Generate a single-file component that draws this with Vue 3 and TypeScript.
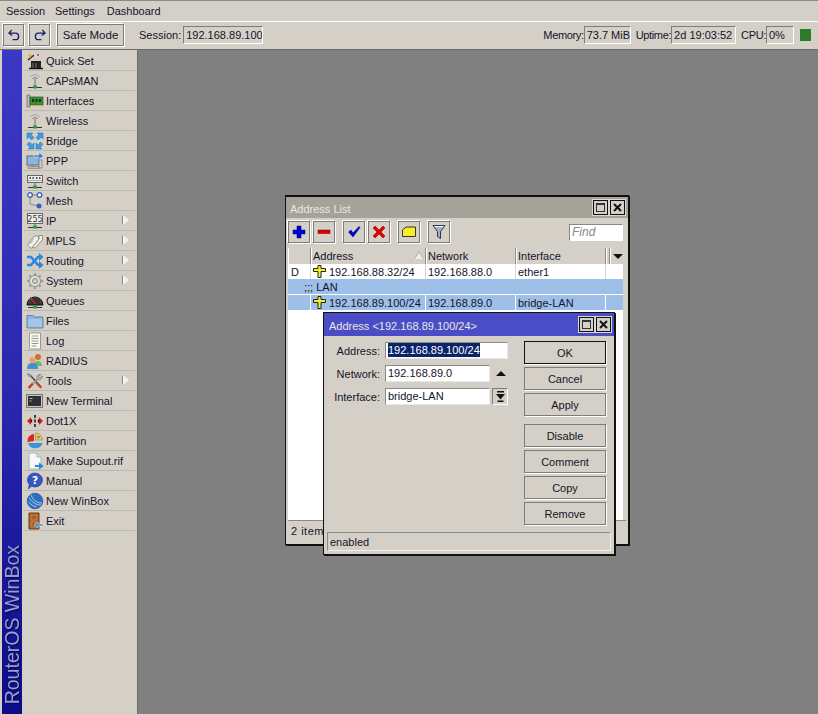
<script setup lang="ts">
interface MenuItem {
  label: string
  icon: string
  sub?: boolean
}

const base = '<path d="M2 15.5h14" stroke="#333" stroke-width="1"/><rect x="7" y="13.5" width="4" height="3" fill="#2f9a3a"/>'
const antenna = '<path d="M6.500 7a3 3 0 0 1 5 0" fill="none" stroke="#888" stroke-width="1.200"/><path d="M4.500 5a5.500 5.500 0 0 1 9 0" fill="none" stroke="#aaa" stroke-width="1.200"/><path d="M9 7v7" stroke="#888" stroke-width="1.400"/>' + base

const icons: Record<string, string> = {
  quickset: '<rect x="5" y="9" width="10" height="7" fill="#222"/><path d="M3 16.500h14" stroke="#111" stroke-width="1.400"/><path d="M7 11v5M10 11v5" stroke="#777"/><path d="M2 8l6-5" stroke="#222" stroke-width="1.500"/><path d="M8 2l3 3" stroke="#ddd" stroke-width="1.500"/><path d="M4 1l1 2 2 .5-2 1-1 2-1-2-2-1 2-.5z" fill="#e9b92a"/><circle cx="12" cy="3" r="1" fill="#d33"/>',
  antenna,
  interfaces: '<path d="M1 3h3v12H1z" fill="#bbb" stroke="#666" stroke-width=".7"/><rect x="4" y="5" width="13" height="8" fill="#3d8f3a" stroke="#23601f" stroke-width=".7"/><path d="M6 7h2v3H6zM9.500 7h2v3h-2zM13 7h2v3h-2z" fill="#1c2f1b"/><path d="M5 13.500h11" stroke="#d6b340"/>',
  bridge: '<g fill="#3f9be2" stroke="#1f6cb0" stroke-width=".5"><path d="M1 1h6L5.200 2.800 8 5.600 5.600 8 2.800 5.200 1 7z"/><path d="M17 1h-6l1.800 1.800L10 5.600 12.400 8l2.800-2.800L17 7z"/><path d="M8 17H2l1.800-1.800L1 12.400 3.400 10l2.800 2.800L8 11z"/><path d="M10 17h6l-1.800-1.800L17 12.400 14.600 10l-2.800 2.800L10 11z"/></g>',
  ppp: '<rect x="1" y="4" width="12" height="9" fill="#8db6dc" stroke="#667" /><path d="M2 14.500h11v2H2z" fill="#bbb" stroke="#777" stroke-width=".6"/><path d="M6 13v2" stroke="#777"/><path d="M8 3h5V.5l4.500 3.500L13 7.500V5H8z" fill="#2d86d6" stroke="#fff" stroke-width=".4"/><rect x="13" y="8" width="3" height="8" fill="#ccc" stroke="#777" stroke-width=".7"/>',
  switch: '<rect x="1.500" y="3.500" width="15" height="7" fill="#eee" stroke="#666"/><path d="M3.500 6h1.500M6.500 6H8M10 6h1.500M13 6h1.500" stroke="#222" stroke-width="1.500"/><path d="M2 8.500h14" stroke="#aaa"/><path d="M9 10.500v3" stroke="#666"/>' + base,
  mesh: '<path d="M4 3h9M4 3v9l9 2" fill="none" stroke="#888" stroke-width="1"/><circle cx="4" cy="3" r="2.300" fill="#fff" stroke="#3a5bc0" stroke-width="1.300"/><circle cx="13.500" cy="3" r="2.300" fill="#fff" stroke="#3a5bc0" stroke-width="1.300"/><circle cx="13" cy="14" r="2.500" fill="#3a5bc0"/>',
  ip: '<rect x="1.500" y="1.500" width="15" height="10" fill="#eee" stroke="#666"/><text x="9" y="9.500" font-size="8" font-family="DejaVu Sans" text-anchor="middle" fill="#333">255</text><path d="M9 11.500v2" stroke="#666"/>' + base,
  mpls: '<g fill="#f1f1ea" stroke="#8a8a80" stroke-width=".9"><path d="M1.500 13l7-9h4v4l-7 8.500z"/><path d="M6 15.500l7-8.500V3.500h3.500v4l-7 8.500z"/></g><path d="M4 12l4-5M8 14l4-5" stroke="#9fc08f"/>',
  routing: '<path d="M1 5h4l7 8h2" fill="none" stroke="#2f86d8" stroke-width="2.600"/><path d="M1 13h4l7-8h2" fill="none" stroke="#2f86d8" stroke-width="2.600"/><path d="M13 1l4.500 4L13 9zM13 9l4.500 4L13 17z" fill="#2f86d8"/>',
  system: '<circle cx="9" cy="9" r="5.500" fill="#e4e2dc" stroke="#8a8a84" stroke-width="1"/><circle cx="9" cy="9" r="2.500" fill="#d4d0c8" stroke="#8a8a84"/><g stroke="#a0a09a" stroke-width="2.400"><path d="M9 1v2.500M9 14.500V17M1 9h2.500M14.500 9H17M3.300 3.300l1.800 1.800M12.900 12.900l1.800 1.800M3.300 14.700l1.800-1.800M12.900 5.100l1.800-1.800"/></g>',
  queues: '<path d="M1 13a8 8 0 0 1 16 0z" fill="#333" stroke="#111"/><path d="M4 5.500L10 12" stroke="#e02020" stroke-width="1.200"/><path d="M3 11a6 6 0 0 1 12 0" fill="none" stroke="#888" stroke-dasharray="1 1.500"/>' + base,
  files: '<path d="M1 3.500h6l1.500 1.500H17v11H1z" fill="#8db7de" stroke="#5c82a8"/><path d="M2 7h14v8H2z" fill="#a4c5e4"/>',
  log: '<path d="M3.500 1h11v16h-11z" fill="#fbfbf4" stroke="#999"/><path d="M5.500 4h7M5.500 6.500h7M5.500 9h7M5.500 11.500h7M5.500 14h5" stroke="#8a9a8a"/>',
  radius: '<circle cx="12" cy="5" r="3" fill="#c9762c"/><path d="M8 14c0-4 2-5 4-5s4 1 4 5z" fill="#6cbd6c"/><circle cx="6.500" cy="8" r="3" fill="#e2a070"/><path d="M1 17c0-5 2.500-6 5.500-6s5.500 1 5.500 6z" fill="#4a8ed0"/>',
  tools: '<path d="M3 2l12 13" stroke="#555" stroke-width="1.800"/><path d="M1 1l3 1 1 3-2 0-2-2z" fill="#999"/><path d="M11 10l5 5-1.500 1.500-5-5z" fill="#d23a24"/><path d="M15 2.500a3.300 3.300 0 0 0-4 4.200L2 15l1.500 1.500 8.300-9a3.300 3.300 0 0 0 4.500-3.800L14 6l-1.800-1.800z" fill="#b8b8b4" stroke="#666" stroke-width=".6"/><path d="M2 15l4-4 1.500 1.500-4 4z" fill="#d23a24"/>',
  terminal: '<rect x=".5" y="2.500" width="16" height="13" fill="#c8c6c0" stroke="#777"/><rect x="2" y="4" width="13" height="10" fill="#2e3036"/><path d="M3.500 6.500h3M3.500 9h2" stroke="#9acb9a"/>',
  dot1x: '<path d="M1 9l4-4v8zM17 9l-4-4v8z" fill="#e01818"/><path d="M5.500 7.500v3M12.500 7.500v3" stroke="#111" stroke-width="1.300"/><path d="M9 3v3M9 7.500v3M9 12v3" stroke="#111" stroke-width="1.500"/>',
  partition: '<path d="M8 2a7 7 0 0 0-6.500 8L8 9z" fill="#e0241c"/><path d="M9.500 1a7 7 0 0 1 7 7H9.500z" fill="#e4c760" stroke="#8a8a40" stroke-width=".6"/><path d="M2 11h14.500a7.500 7 0 0 1-14.500 0z" fill="#3c93d8"/><path d="M11.500 4h2v2h-2z" fill="#5e8a50"/>',
  supout: '<path d="M3 1h8l4 4v12H3z" fill="#f4f8fb" stroke="#9bb"/><path d="M11 1v4h4" fill="#cde" stroke="#9bb"/><path d="M9 13h4v-2.500l4.500 3.500-4.500 3.500V15H9z" fill="#2f86d8"/>',
  manual: '<path d="M9 1a7.500 7 0 1 1-3.500 13.200L2.500 17l.7-4.500A7.500 7 0 0 1 9 1z" fill="#3658c4" stroke="#1d3590" stroke-width=".6"/><text x="9" y="12" font-size="10.500" font-family="DejaVu Sans" font-weight="bold" text-anchor="middle" fill="#fff">?</text>',
  winbox: '<circle cx="9" cy="9" r="7.800" fill="#2f6fc0" stroke="#1d4b8e" stroke-width=".7"/><path d="M3 6c4 5 7 7 12 7M5 3c2 5 5 8 11 8M2.500 10c2 2 4 4 8 5" fill="none" stroke="#bcd7f1" stroke-width=".9"/>',
  exit: '<path d="M3 1h10v16H3z" fill="#a8602a" stroke="#6b3a14"/><path d="M5 3h6v5H5zM5 10h6v5H5z" fill="none" stroke="#d09050" stroke-width=".8"/><path d="M8 13l4-3v2h5v2h-5v2z" fill="#3f93de" stroke="#fff" stroke-width=".4"/>',
}

const menu: MenuItem[] = [
  { label: 'Quick Set', icon: 'quickset' },
  { label: 'CAPsMAN', icon: 'antenna' },
  { label: 'Interfaces', icon: 'interfaces' },
  { label: 'Wireless', icon: 'antenna' },
  { label: 'Bridge', icon: 'bridge' },
  { label: 'PPP', icon: 'ppp' },
  { label: 'Switch', icon: 'switch' },
  { label: 'Mesh', icon: 'mesh' },
  { label: 'IP', icon: 'ip', sub: true },
  { label: 'MPLS', icon: 'mpls', sub: true },
  { label: 'Routing', icon: 'routing', sub: true },
  { label: 'System', icon: 'system', sub: true },
  { label: 'Queues', icon: 'queues' },
  { label: 'Files', icon: 'files' },
  { label: 'Log', icon: 'log' },
  { label: 'RADIUS', icon: 'radius' },
  { label: 'Tools', icon: 'tools', sub: true },
  { label: 'New Terminal', icon: 'terminal' },
  { label: 'Dot1X', icon: 'dot1x' },
  { label: 'Partition', icon: 'partition' },
  { label: 'Make Supout.rif', icon: 'supout' },
  { label: 'Manual', icon: 'manual' },
  { label: 'New WinBox', icon: 'winbox' },
  { label: 'Exit', icon: 'exit' },
]

const actions = ['Disable', 'Comment', 'Copy', 'Remove']
</script>

<template>
  <div class="app">
    <div class="menubar">
      <span class="first">Session</span>
      <span>Settings</span>
      <span>Dashboard</span>
    </div>

    <div class="toolbar">
      <button class="btn icon-btn" type="button">
        <svg width="12" height="12" viewBox="0 0 13 13"><path d="M4 1L1 4.500l3.500 2.500M1.500 4.500H8a3.500 3.500 0 0 1 0 7H5" fill="none" stroke="#16206e" stroke-width="1.500"/></svg>
      </button>
      <button class="btn icon-btn" type="button">
        <svg width="12" height="12" viewBox="0 0 13 13"><path d="M9 1l3 3.500L8.500 7M11.500 4.500H5a3.500 3.500 0 0 0 0 7h3" fill="none" stroke="#16206e" stroke-width="1.500"/></svg>
      </button>
      <button class="btn safe-btn" type="button">Safe Mode</button>
      <span class="tool-label session-label">Session:</span>
      <span class="field session-field">192.168.89.100</span>
      <div class="stats">
        <span class="tool-label">Memory:</span>
        <span class="field mem-field">73.7 MiB</span>
        <span class="tool-label uptime-label">Uptime:</span>
        <span class="field up-field">2d 19:03:52</span>
        <span class="tool-label cpu-label">CPU:</span>
        <span class="field cpu-field">0%</span>
        <span class="cpu-led"></span>
      </div>
    </div>

    <div class="main">
      <aside class="sidebar">
        <div class="brand"><span>RouterOS WinBox</span></div>
        <ul class="nav">
          <li v-for="item in menu" :key="item.label" class="nav-item">
            <svg class="nav-icon" width="18" height="18" viewBox="0 0 18 18" v-html="icons[item.icon]"></svg>
            <span>{{ item.label }}</span>
            <i v-if="item.sub" class="caret"></i>
          </li>
        </ul>
      </aside>

      <section class="desktop">
        <div class="window list-window">
          <header class="titlebar inactive">
            <span>Address List</span>
            <div class="win-btns">
              <span class="win-btn"><i class="max"></i></span>
              <span class="win-btn">
                <svg width="9" height="9" viewBox="0 0 9 9"><path d="M1 1l7 7M8 1L1 8" stroke="#111" stroke-width="2"/></svg>
              </span>
            </div>
          </header>

          <div class="list-tools">
            <button class="btn tool" type="button">
              <svg width="14" height="14" viewBox="0 0 14 14"><path d="M5 1h4v4h4v4H9v4H5V9H1V5h4z" fill="#0000e0" stroke="#000050" stroke-width=".5"/></svg>
            </button>
            <button class="btn tool" type="button">
              <svg width="14" height="14" viewBox="0 0 14 14"><path d="M1 5h12v3.500H1z" fill="#e00000" stroke="#700" stroke-width=".5"/></svg>
            </button>
            <button class="btn tool gap-left" type="button">
              <svg width="14" height="14" viewBox="0 0 14 14"><path d="M1.500 7L4 5l2 3 6-6.500 1 1L6 12z" fill="#0000d8" stroke="#000060" stroke-width=".5"/></svg>
            </button>
            <button class="btn tool" type="button">
              <svg width="14" height="14" viewBox="0 0 14 14"><path d="M3 1l4 4 4-4 2 2-4 4 4 4-2 2-4-4-4 4-2-2 4-4-4-4z" fill="#e80000" stroke="#700" stroke-width=".5"/></svg>
            </button>
            <button class="btn tool gap-left" type="button">
              <svg width="14" height="14" viewBox="0 0 14 14"><path d="M.5 5L4 2h9.500v9.500H.5z" fill="#f8f020" stroke="#333"/></svg>
            </button>
            <button class="btn tool gap-left" type="button">
              <svg width="14" height="16" viewBox="0 0 14 16"><path d="M1 1.500h12L8.500 7.500v7l-3-2v-5z" fill="#9fb4d8" stroke="#333"/><path d="M2.500 2.500h9" stroke="#fff"/></svg>
            </button>
            <span class="find">Find</span>
          </div>

          <div class="table">
            <div class="thead">
              <span class="th col-flag"></span>
              <span class="th col-addr">Address<i class="sort"></i></span>
              <span class="th col-net">Network</span>
              <span class="th col-if">Interface</span>
              <span class="th col-gap"></span>
              <span class="th col-menu"><i class="drop"></i></span>
            </div>
            <div class="tr">
              <span class="td col-flag">D</span>
              <span class="td col-addr">
                <svg class="addr-icon" width="13" height="13" viewBox="0 0 13 13"><path d="M5 .5h3v3h4.500v3H8v6H5v-6H.5v-3H5z" fill="#f8ee28" stroke="#222"/></svg>192.168.88.32/24
              </span>
              <span class="td col-net">192.168.88.0</span>
              <span class="td col-if">ether1</span>
            </div>
            <div class="tr comment">;;; LAN</div>
            <div class="tr selected">
              <span class="td col-flag"></span>
              <span class="td col-addr">
                <svg class="addr-icon" width="13" height="13" viewBox="0 0 13 13"><path d="M5 .5h3v3h4.500v3H8v6H5v-6H.5v-3H5z" fill="#f8ee28" stroke="#222"/></svg>192.168.89.100/24
              </span>
              <span class="td col-net">192.168.89.0</span>
              <span class="td col-if">bridge-LAN</span>
            </div>
          </div>

          <div class="list-status">2 items</div>
        </div>

        <div class="window dialog">
          <header class="titlebar active">
            <span>Address &lt;192.168.89.100/24&gt;</span>
            <div class="win-btns">
              <span class="win-btn"><i class="max"></i></span>
              <span class="win-btn">
                <svg width="9" height="9" viewBox="0 0 9 9"><path d="M1 1l7 7M8 1L1 8" stroke="#111" stroke-width="2"/></svg>
              </span>
            </div>
          </header>

          <div class="dialog-body">
            <div class="form">
              <div class="row">
                <label>Address:</label>
                <span class="input wide"><b>192.168.89.100/24</b></span>
              </div>
              <div class="row">
                <label>Network:</label>
                <span class="input">192.168.89.0</span>
                <i class="up-arrow"></i>
              </div>
              <div class="row">
                <label>Interface:</label>
                <span class="input">bridge-LAN</span>
                <span class="drop-btn">
                  <svg width="9" height="11" viewBox="0 0 9 11"><path d="M1 0h7v1.500H1zM0 3h9L4.500 8.500zM1.500 9.500h6V11h-6z" fill="#111"/></svg>
                </span>
              </div>
            </div>

            <div class="actions">
              <button class="btn act default" type="button">OK</button>
              <button class="btn act" type="button">Cancel</button>
              <button class="btn act" type="button">Apply</button>
              <button v-for="(a, i) in actions" :key="a" class="btn act" :class="{ spaced: i === 0 }" type="button">{{ a }}</button>
            </div>
          </div>

          <div class="dialog-status">enabled</div>
        </div>
      </section>
    </div>
  </div>
</template>

<style>
html,
body {
  margin: 0;
  background: #808080;
}
</style>

<style scoped>
.app {
  width: 818px;
  height: 714px;
  display: flex;
  flex-direction: column;
  overflow: hidden;
  background: #d4d0c8;
  color: #141428;
  font-family: "Liberation Sans", sans-serif;
  font-size: 11px;
  box-sizing: border-box;
  border-top: 1px solid #8c8a84;
}

.menubar {
  height: 20px;
  display: flex;
  align-items: center;
  gap: 12px;
  padding-left: 6px;
  border-bottom: 1px solid #fff;
  flex: none;
}

.menubar .first {
  width: 37px;
  white-space: nowrap;
}

.toolbar {
  height: 25px;
  display: flex;
  align-items: center;
  padding: 0 7px 2px 2px;
  border-bottom: 1px solid #6e6e6a;
  flex: none;
}

.btn {
  margin: 0;
  padding: 0;
  font: inherit;
  color: inherit;
  background: #d4d0c8;
  border: 1px solid #7c7c78;
  box-shadow: 1px 1px 0 #fff, -1px -1px 0 #fff;
  display: flex;
  align-items: center;
  justify-content: center;
  box-sizing: border-box;
}

.icon-btn {
  width: 21px;
  height: 22px;
  margin-right: 4px;
  margin-left: 1px;
}

.safe-btn {
  width: 67px;
  height: 22px;
  margin-left: 3px;
  font-size: 11.5px;
}

.tool-label {
  white-space: nowrap;
}

.session-label {
  margin-left: 15px;
  margin-right: 2px;
}

.stats .tool-label {
  letter-spacing: -0.35px;
}

.field {
  box-sizing: border-box;
  height: 18px;
  line-height: 16px;
  padding: 0 2px;
  border: 1px solid #7c7c78;
  border-right-color: #fff;
  border-bottom-color: #fff;
  white-space: nowrap;
  overflow: hidden;
}

.session-field {
  width: 80px;
}

.stats {
  margin-left: auto;
  display: flex;
  align-items: center;
}

.mem-field {
  width: 47px;
}

.up-field {
  width: 65px;
}

.cpu-field {
  width: 28px;
}

.uptime-label {
  margin-left: 5px;
}

.cpu-label {
  margin-left: 5px;
}

.cpu-led {
  width: 11px;
  height: 12px;
  margin-left: 6px;
  background: #2c7a2c;
}

.main {
  flex: 1;
  min-height: 0;
  display: flex;
}

.sidebar {
  width: 138px;
  flex: none;
  display: flex;
  padding-left: 2px;
  box-sizing: border-box;
  border-right: 1px solid #6e6e6a;
  background: #d4d0c8;
}

.brand {
  width: 20px;
  flex: none;
  background: linear-gradient(180deg, #3b38c6 0%, #2a28b0 50%, #0c0c88 100%);
  display: flex;
  align-items: flex-end;
  justify-content: center;
  padding-bottom: 10px;
  box-sizing: border-box;
}

.brand span {
  writing-mode: vertical-rl;
  transform: rotate(180deg);
  font-family: "Liberation Sans", sans-serif;
  font-size: 19.5px;
  line-height: 20px;
  color: #9a9ec8;
  text-shadow: -1px 1px 1px #05054a;
  white-space: nowrap;
}

.nav {
  list-style: none;
  margin: 1px 2px 0 2px;
  padding: 0;
  flex: 1;
}

.nav-item {
  height: 20px;
  display: flex;
  align-items: center;
  position: relative;
  box-sizing: border-box;
  border-bottom: 1px solid #bcb9b1;
  padding-left: 2px;
}

.nav-icon {
  flex: none;
  margin-right: 2px;
}

.caret {
  position: absolute;
  right: 6px;
  top: 4px;
  width: 0;
  height: 0;
  border-left: 6px solid #f4f2ec;
  border-top: 5px solid transparent;
  border-bottom: 5px solid transparent;
  filter: drop-shadow(-1px 0 0 #8c8a84);
}

.desktop {
  flex: 1;
  position: relative;
  background: #808080;
}

.window {
  position: absolute;
  box-sizing: border-box;
  background: #d4d0c8;
  border: 1px solid #111;
  box-shadow: 1px 1px 0 #111;
}

.list-window {
  left: 147px;
  top: 145px;
  width: 344px;
  height: 350px;
  border-top-width: 2px;
  padding: 0 2px;
}

.dialog {
  left: 185px;
  top: 262px;
  width: 292px;
  height: 243px;
}

.titlebar {
  height: 21px;
  display: flex;
  align-items: center;
  justify-content: space-between;
  padding: 0 3px 0 5px;
  color: #e8e8e4;
}

.titlebar > span {
  padding-top: 2px;
}

.titlebar.inactive {
  margin: 0 -2px;
  padding-left: 4px;
  background: #a5a299;
}

.titlebar.active {
  height: 23px;
  background: #4b4dc6;
}

.win-btns {
  display: flex;
  gap: 2px;
}

.win-btn {
  width: 15px;
  height: 15px;
  box-sizing: border-box;
  border: 1px solid #111;
  background: #d4d0c8;
  box-shadow: 0 0 0 1px #d8d8d2;
  display: flex;
  align-items: center;
  justify-content: center;
}

.max {
  width: 9px;
  height: 9px;
  box-sizing: border-box;
  border: 1px solid #333;
  border-top-width: 2px;
}

.list-tools {
  height: 30px;
  display: flex;
  align-items: center;
  padding-bottom: 2px;
  box-sizing: border-box;
}

.tool {
  width: 22px;
  height: 22px;
  margin-right: 3px;
}

.gap-left {
  margin-left: 5px;
}

.find {
  margin-left: auto;
  margin-right: 3px;
  width: 54px;
  height: 17px;
  box-sizing: border-box;
  background: #fff;
  border: 1px solid #888;
  border-right-color: #fff;
  border-bottom-color: #fff;
  color: #8a8a8a;
  font-style: italic;
  font-size: 12px;
  line-height: 15px;
  padding-left: 2px;
}

.table {
  height: 272px;
  margin-right: 3px;
  background: #fff;
  overflow: hidden;
}

.thead {
  display: flex;
  height: 16px;
  background: #d4d0c8;
}

.th {
  box-sizing: border-box;
  height: 16px;
  line-height: 17px;
  padding-left: 1px;
  position: relative;
  border-left: 1px solid #fff;
  border-right: 1px solid #8c8a84;
}

.col-flag {
  width: 23px;
  flex: none;
}

.col-addr {
  width: 115px;
  flex: none;
}

.col-net {
  width: 90px;
  flex: none;
}

.col-if {
  width: 90px;
  flex: none;
}

.col-gap {
  width: 4px;
  flex: none;
  padding: 0;
}

.col-menu {
  width: 14px;
  flex: none;
  padding: 0;
}

.sort {
  position: absolute;
  right: 2px;
  top: 4px;
  width: 0;
  height: 0;
  border-left: 4px solid transparent;
  border-right: 4px solid transparent;
  border-bottom: 7px solid #efefe8;
  filter: drop-shadow(0 -1px 0 #8c8a84);
}

.drop {
  position: absolute;
  left: 2px;
  top: 6px;
  width: 0;
  height: 0;
  border-left: 5px solid transparent;
  border-right: 5px solid transparent;
  border-top: 5px solid #111;
}

.tr {
  display: flex;
  height: 15px;
  line-height: 16px;
  white-space: nowrap;
}

.td {
  box-sizing: border-box;
  padding-left: 2px;
  display: flex;
  align-items: center;
  border-right: 1px solid #d8d8d2;
}

.td.col-flag {
  padding-left: 3px;
}

.addr-icon {
  margin-right: 3px;
  flex: none;
}

.comment {
  background: #9dbfe8;
  padding-left: 16px;
}

.selected {
  background: #9dbfe8;
  border-top: 1px solid #fff;
}

.selected .td {
  border-right-color: #fff;
}

.list-status {
  height: 20px;
  line-height: 20px;
  padding-left: 3px;
  border-top: 1px solid #8c8a84;
  letter-spacing: 0.5px;
}

.dialog-body {
  display: flex;
  height: 195px;
  padding-top: 5px;
  box-sizing: border-box;
}

.form {
  width: 200px;
  padding-top: 1px;
  flex: none;
}

.row {
  display: flex;
  align-items: center;
  height: 17px;
  margin-bottom: 6px;
}

.row label {
  width: 56px;
  text-align: right;
  flex: none;
  margin-right: 5px;
}

.input {
  box-sizing: border-box;
  width: 105px;
  height: 17px;
  line-height: 15px;
  padding: 0 2px;
  background: #fff;
  border: 1px solid #8c8a84;
  border-right-color: #e8e8e4;
  border-bottom-color: #e8e8e4;
  white-space: nowrap;
  flex: none;
}

.input.wide {
  width: 123px;
}

.input b {
  font-weight: normal;
  background: #0a246a;
  color: #fff;
  display: inline-block;
  height: 14px;
  line-height: 14px;
}

.up-arrow {
  width: 0;
  height: 0;
  margin-left: 6px;
  border-left: 5px solid transparent;
  border-right: 5px solid transparent;
  border-bottom: 5px solid #111;
}

.drop-btn {
  width: 16px;
  height: 17px;
  margin-left: 2px;
  box-sizing: border-box;
  border: 1px solid #7c7c78;
  border-right-color: #fff;
  border-bottom-color: #fff;
  display: flex;
  align-items: center;
  justify-content: center;
}

.actions {
  display: flex;
  flex-direction: column;
  gap: 3px;
  width: 82px;
}

.act {
  width: 82px;
  height: 23px;
  box-shadow: 1px 1px 0 #fff;
}

.act.default {
  border-color: #111;
}

.act.spaced {
  margin-top: 5px;
}

.dialog-status {
  margin: 1px 3px 0;
  height: 19px;
  line-height: 19px;
  padding-left: 2px;
  border: 1px solid #8c8a84;
  border-right-color: #f0f0ea;
  border-bottom-color: #f0f0ea;
  box-sizing: border-box;
}
</style>
